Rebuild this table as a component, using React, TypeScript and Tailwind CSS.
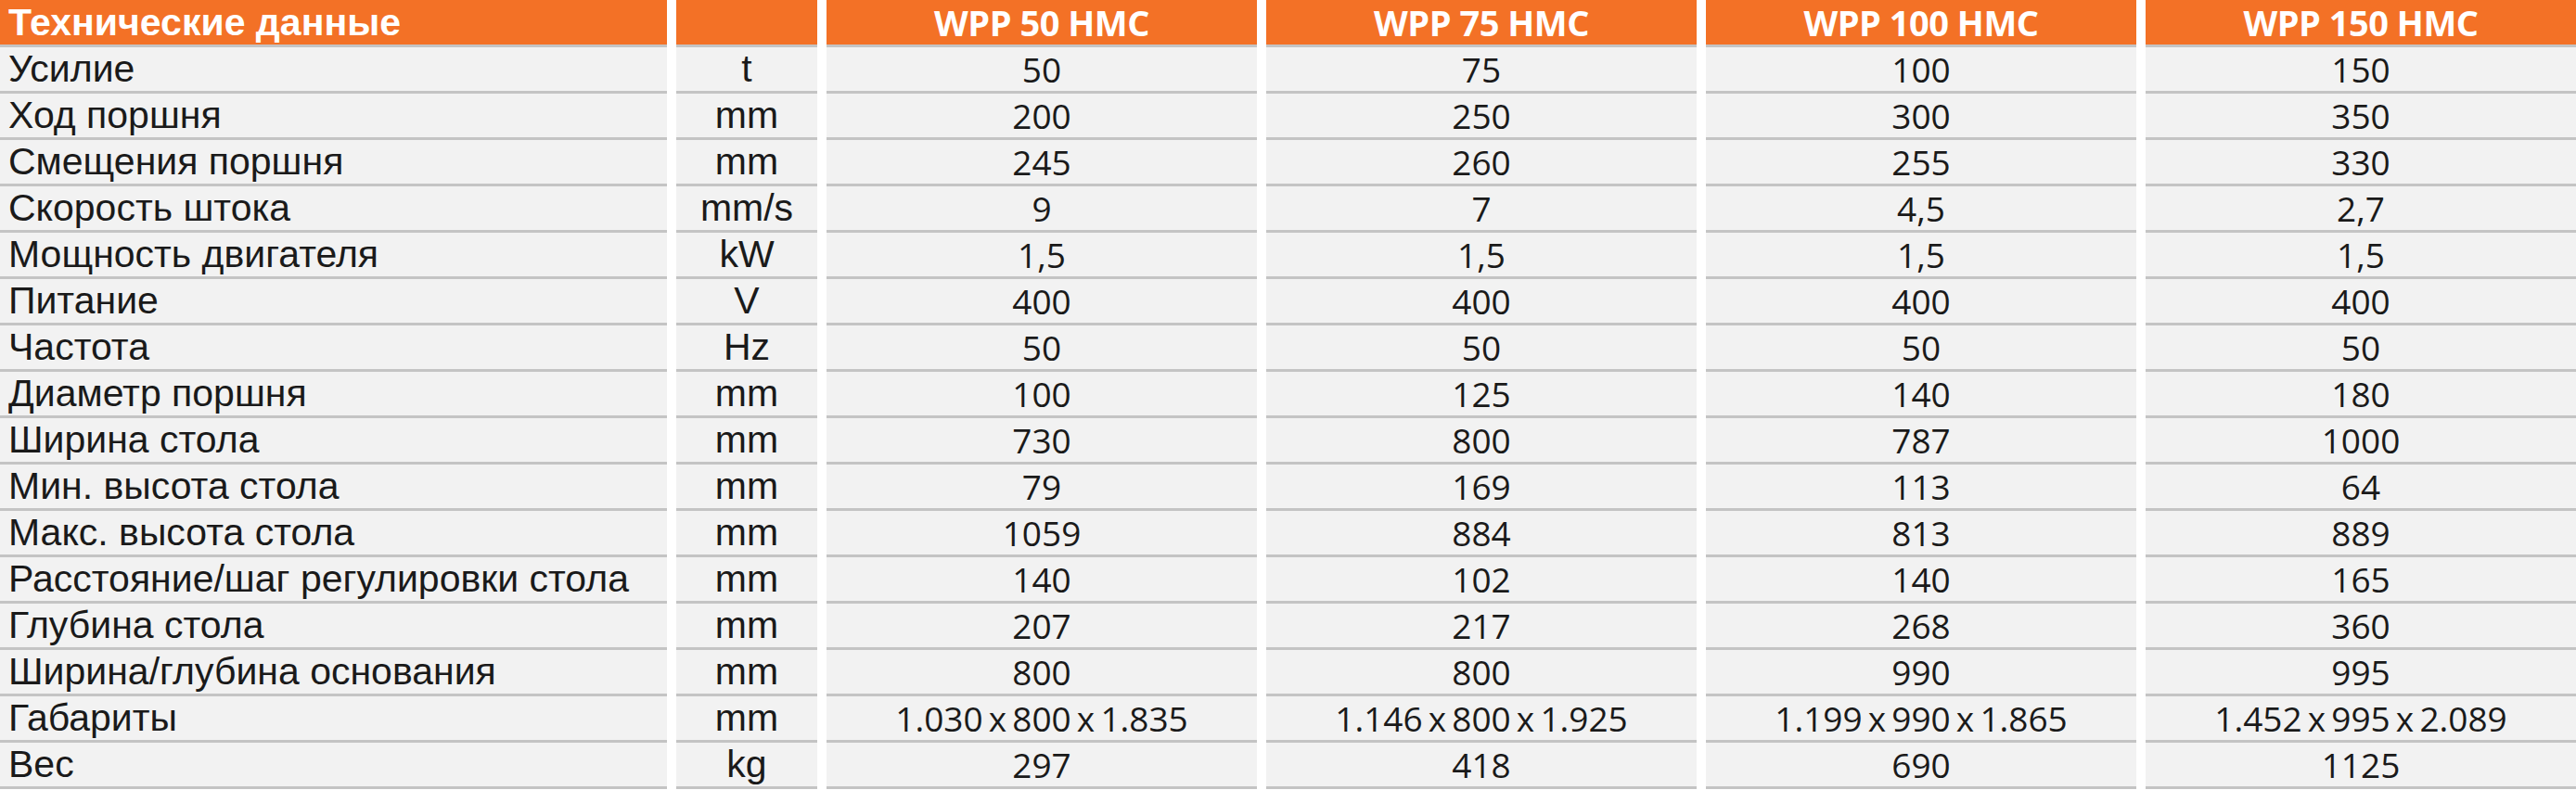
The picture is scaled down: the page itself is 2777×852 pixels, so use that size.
import React from "react";

const models = ["WPP 50 HMC", "WPP 75 HMC", "WPP 100 HMC", "WPP 150 HMC"];

const dims = (a: string, b: string, c: string) => `${a}\u2009x\u2009${b}\u2009x\u2009${c}`;

const rows: [string, string, string[]][] = [
  ["Усилие", "t", ["50", "75", "100", "150"]],
  ["Ход поршня", "mm", ["200", "250", "300", "350"]],
  ["Смещения поршня", "mm", ["245", "260", "255", "330"]],
  ["Скорость штока", "mm/s", ["9", "7", "4,5", "2,7"]],
  ["Мощность двигателя", "kW", ["1,5", "1,5", "1,5", "1,5"]],
  ["Питание", "V", ["400", "400", "400", "400"]],
  ["Частота", "Hz", ["50", "50", "50", "50"]],
  ["Диаметр поршня", "mm", ["100", "125", "140", "180"]],
  ["Ширина стола", "mm", ["730", "800", "787", "1000"]],
  ["Мин. высота стола", "mm", ["79", "169", "113", "64"]],
  ["Макс. высота стола", "mm", ["1059", "884", "813", "889"]],
  ["Расстояние/шаг регулировки стола", "mm", ["140", "102", "140", "165"]],
  ["Глубина стола", "mm", ["207", "217", "268", "360"]],
  ["Ширина/глубина основания", "mm", ["800", "800", "990", "995"]],
  [
    "Габариты",
    "mm",
    [
      dims("1.030", "800", "1.835"),
      dims("1.146", "800", "1.925"),
      dims("1.199", "990", "1.865"),
      dims("1.452", "995", "2.089"),
    ],
  ],
  ["Вес", "kg", ["297", "418", "690", "1125"]],
];

export default function App() {
  return (
    <div className="w-[2777px] h-[852px] bg-white overflow-hidden">
      <div className="grid grid-cols-[719px_152px_repeat(4,1fr)] gap-x-[10px]">
        {/* Header */}
        <div className="h-[48px] bg-[#f37126] flex items-center pl-[9px] text-white font-bold text-[41px] font-['Liberation_Sans',Arial,sans-serif] leading-[48px]">
          Технические данные
        </div>
        <div className="h-[48px] bg-[#f37126]" />
        {models.map((m) => (
          <div
            key={m}
            className="h-[48px] bg-[#f37126] flex items-center justify-center text-white font-bold text-[38px] tracking-[-0.5px] font-['Open_Sans',sans-serif] leading-[48px]"
          >
            {m}
          </div>
        ))}

        {/* Body */}
        {rows.map(([label, unit, vals], i) => {
          const last = i === rows.length - 1;
          const cell = `h-[50px] bg-[#f2f2f2] border-t-[3px] border-[#c4c4c4] flex items-center text-[#1a1a1a] leading-none ${
            last ? "border-b-[3px] h-[53px]" : ""
          }`;
          return (
            <React.Fragment key={label}>
              <div className={`${cell} pl-[9px] text-[41px] font-['Liberation_Sans',Arial,sans-serif]`}>
                {label}
              </div>
              <div className={`${cell} justify-center text-[41px] font-['Liberation_Sans',Arial,sans-serif]`}>
                {unit}
              </div>
              {vals.map((v, j) => (
                <div
                  key={j}
                  className={`${cell} justify-center text-[37px] font-['Open_Sans',sans-serif]`}
                >
                  {v}
                </div>
              ))}
            </React.Fragment>
          );
        })}
      </div>
    </div>
  );
}
